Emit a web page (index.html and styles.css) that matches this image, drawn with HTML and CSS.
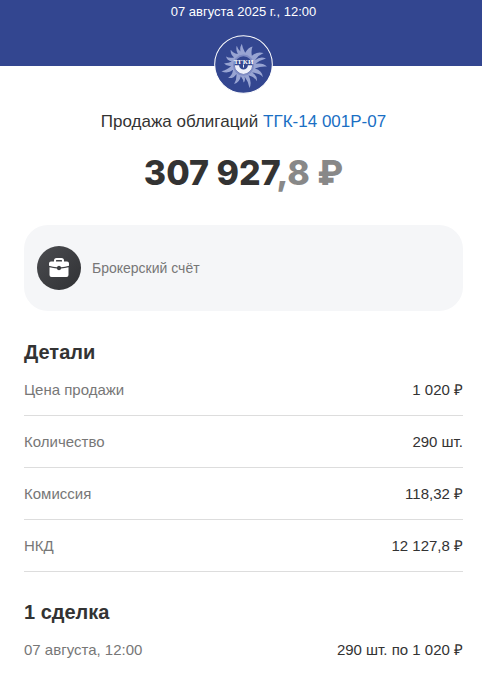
FILE: index.html
```html
<!DOCTYPE html>
<html lang="ru">
<head>
    <meta charset="UTF-8">
    <meta name="viewport" content="width=device-width, initial-scale=1.0">
    <title>Продажа облигаций ТГК-14 001Р-07</title>
    <link rel="stylesheet" href="styles.css">
</head>
<body>
    <header class="top">
        <time class="top-date" datetime="2025-08-07T12:00">07 августа 2025 г., 12:00</time>
        <!-- Логотип эмитента -->
        <svg class="logo" viewBox="0 0 176 176" aria-hidden="true">
            <circle cx="88" cy="88" r="86" fill="#334690" stroke="#fff" stroke-width="3"/>
            <path fill="#98a4d2" d="M79 49Q76 38 83 26Q85 39 93 53Q102 37 115 34Q110 46 113 62Q128 48 148 54Q133 60 122 75Q138 63 155 70Q137 75 124 86Q146 82 158 94Q140 92 122 100Q144 106 146 126Q136 114 114 112Q130 122 128 138Q121 125 103 120Q114 142 106 158Q103 140 91 124Q95 136 88 142Q88 133 80 123Q76 142 60 146Q68 134 67 116Q58 131 42 128Q54 122 57 104Q41 117 22 108Q39 105 52 92Q38 95 30 84Q42 85 53 79Q38 76 36 64Q45 70 60 67Q48 57 50 44Q56 54 71 57Q64 43 68 32Q71 43 79 49Z"/>
            <circle cx="88" cy="90" r="29" fill="#334690" stroke="#7f8cc4" stroke-width="5"/>
            <path fill="#eef0fa" d="M62 90A26 26 0 0 0 114 90L101 90A13 13 0 0 1 75 90Z"/>
            <path stroke="#eef0fa" stroke-width="3" fill="none" d="M88 88v9"/>
            <text class="logo-text" x="88" y="87" text-anchor="middle">ТГКИ</text>
        </svg>
    </header>

    <main class="content">
        <h1 class="title">Продажа облигаций <a href="#">ТГК-14 001Р-07</a></h1>
        <p class="amount">307 927<span class="amount-rest">,8 ₽</span></p>

        <section class="account">
            <svg class="account-icon" viewBox="0 0 44 44" aria-hidden="true">
                <defs>
                    <linearGradient id="dark" x1="0" y1="0" x2="1" y2="1">
                        <stop offset="0" stop-color="#4b4c50"/>
                        <stop offset="1" stop-color="#303134"/>
                    </linearGradient>
                </defs>
                <circle cx="22" cy="22" r="22" fill="url(#dark)"/>
                <path fill="none" stroke="#fff" stroke-width="2" d="M18 16v-1.500a1.500 1.500 0 0 1 1.500-1.500h5a1.500 1.500 0 0 1 1.500 1.500V16"/>
                <path fill="#fff" d="M14 15.500h16a2 2 0 0 1 2 2v2.200q-4 1.300-7.900 1.500a2.200 2.200 0 0 0-4.200 0q-3.900-.2-7.900-1.500v-2.200a2 2 0 0 1 2-2Z"/>
                <path fill="#fff" d="M12.500 21.200q3.700 1.100 7.300 1.300a2.300 2.300 0 0 0 4.400 0q3.600-.2 7.300-1.300v7.800a2 2 0 0 1-2 2h-15a2 2 0 0 1-2-2Z"/>
            </svg>
            <span>Брокерский счёт</span>
        </section>

        <section class="block">
            <h2>Детали</h2>
            <dl class="rows">
                <div class="row"><dt>Цена продажи</dt><dd>1 020 ₽</dd></div>
                <div class="row"><dt>Количество</dt><dd>290 шт.</dd></div>
                <div class="row"><dt>Комиссия</dt><dd>118,32 ₽</dd></div>
                <div class="row"><dt>НКД</dt><dd>12 127,8 ₽</dd></div>
            </dl>
        </section>

        <section class="block">
            <h2>1 сделка</h2>
            <dl class="rows">
                <div class="row row-last"><dt>07 августа, 12:00</dt><dd>290 шт. по 1 020 ₽</dd></div>
            </dl>
        </section>
    </main>
</body>
</html>
```
FILE: styles.css
```css
* {
    margin: 0;
    padding: 0;
    box-sizing: border-box;
}

body {
    font-family: 'Liberation Sans', Arial, sans-serif;
    font-size: 15px;
    line-height: 20px;
    color: #333;
    background: #fff;
}

.top {
    display: flex;
    flex-direction: column;
    align-items: center;
    gap: 13px;
    height: 66px;
    padding: 2px 19px 0 24px;
    background: #334690;
}

.top-date {
    font-size: 13px;
    color: #fff;
}

/* логотип выступает за нижний край шапки */
.logo {
    flex-shrink: 0;
    width: 59px;
    height: 59px;
}

.logo-text {
    font-family: 'Liberation Serif', serif;
    font-size: 21px;
    font-weight: bold;
    fill: #fff;
}

.content {
    padding: 44px 19px 24px 24px;
}

.title {
    font-size: 17px;
    font-weight: 400;
    line-height: 24px;
    text-align: center;
}

.title a {
    color: #1a6fc4;
    text-decoration: none;
}

.amount {
    margin-top: 15px;
    font-family: 'Inter', 'Liberation Sans', sans-serif;
    font-size: 34px;
    font-weight: 800;
    line-height: 48px;
    text-align: center;
}

.amount-rest {
    color: #888;
}

.account {
    display: flex;
    align-items: center;
    gap: 11px;
    margin: 28px 0 27px;
    padding: 21px 13px;
    font-size: 14px;
    color: #777;
    background: #f5f6f8;
    border-radius: 24px;
}

.account-icon {
    width: 44px;
    height: 44px;
}

.block + .block {
    margin-top: 26px;
}

h2 {
    font-size: 20px;
    font-weight: 700;
    line-height: 28px;
}

.row {
    display: flex;
    justify-content: space-between;
    padding: 16px 0 15px;
    border-bottom: 1px solid #ddd;
}

.row:first-child {
    padding-top: 14px;
}

.row-last {
    border-bottom: none;
}

dt {
    color: #777;
}
```
